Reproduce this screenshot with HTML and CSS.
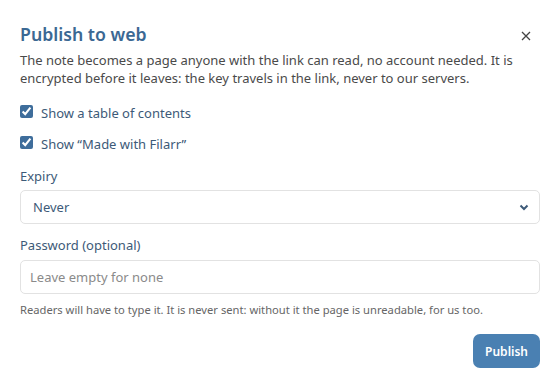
FILE: index.html
```html
<!DOCTYPE html>
<html lang="en">
<head>
<meta charset="utf-8">
<link rel="stylesheet" href="styles.css">
</head>
<body>
<div class="dialog">
  <div class="header">
    <h1 class="title">Publish to web</h1>
    <button class="close" aria-label="Close">
      <svg width="10" height="10" viewBox="0 0 10 10"><path d="M1 1L9 9M9 1L1 9" stroke="#444" stroke-width="1.3" fill="none"/></svg>
    </button>
  </div>
  <p class="intro">The note becomes a page anyone with the link can read, no account needed. It is encrypted before it leaves: the key travels in the link, never to our servers.</p>
  <label class="check first"><input type="checkbox" checked><span>Show a table of contents</span></label>
  <label class="check"><input type="checkbox" checked><span>Show “Made with Filarr”</span></label>
  <div class="field">
    <label class="label">Expiry</label>
    <div class="select">
      <span>Never</span>
      <svg width="10" height="7" viewBox="0 0 10 7"><path d="M1.5 1.5L5 5L8.5 1.5" stroke="#3d5a78" stroke-width="2" fill="none"/></svg>
    </div>
  </div>
  <div class="field second">
    <label class="label">Password (optional)</label>
    <div class="input"><span class="ph">Leave empty for none</span></div>
    <p class="hint">Readers will have to type it. It is never sent: without it the page is unreadable, for us too.</p>
  </div>
  <div class="actions">
    <button class="primary">Publish</button>
  </div>
</div>
</body>
</html>
```
FILE: styles.css
```css
* { box-sizing: border-box; }
html, body { margin: 0; background: #fff; }
body { font-family: "Noto Sans", "Open Sans", sans-serif; color: #444; }
.dialog { width: 560px; height: 386px; padding: 22px 20px 0 20px; display: flex; flex-direction: column; }
.header { display: flex; justify-content: space-between; align-items: center; height: 24px; }
.title { margin: 0; font-size: 17.7px; font-weight: 600; color: #3b6893; }
.close { border: 0; background: none; padding: 0; width: 12px; height: 12px; margin: 4px 8px 0 0; display: flex; align-items: center; justify-content: center; }
.intro { margin: 5px 0 0 0; font-size: 13px; line-height: 18px; color: #4a4a4a; }
.check { display: flex; align-items: center; gap: 8px; font-size: 13px; color: #3d5a78; height: 20px; }
.check.first { margin-top: 16px; }
.check + .check { margin-top: 11px; }
.check input { margin: 0; width: 13px; height: 13px; accent-color: #3e6d9b; position: relative; top: -2px; }
.field { display: flex; flex-direction: column; }
.label { font-size: 13px; color: #3d5a78; margin-top: 12px; height: 20px; display: flex; align-items: center; }
.field.second .label { margin-top: 11px; }
.select, .input { height: 34px; border: 1px solid #e2e2e2; border-radius: 5px; display: flex; align-items: center; justify-content: space-between; padding: 0 10px 0 12px; font-size: 13px; }
.select { margin-top: 4px; }
.input { margin-top: 5px; }
.select span { color: #3d5a78; }
.ph { color: #8a8a8a; margin-left: -3px; }
.hint { margin: 8px 0 0 0; font-size: 11.2px; color: #666; line-height: 16px; }
.actions { display: flex; justify-content: flex-end; margin-top: 16px; }
.primary { border: 0; background: #4a80b2; color: #fff; font-family: inherit; font-size: 12px; font-weight: 600; height: 34px; padding: 0 12px; border-radius: 7px; }
```
